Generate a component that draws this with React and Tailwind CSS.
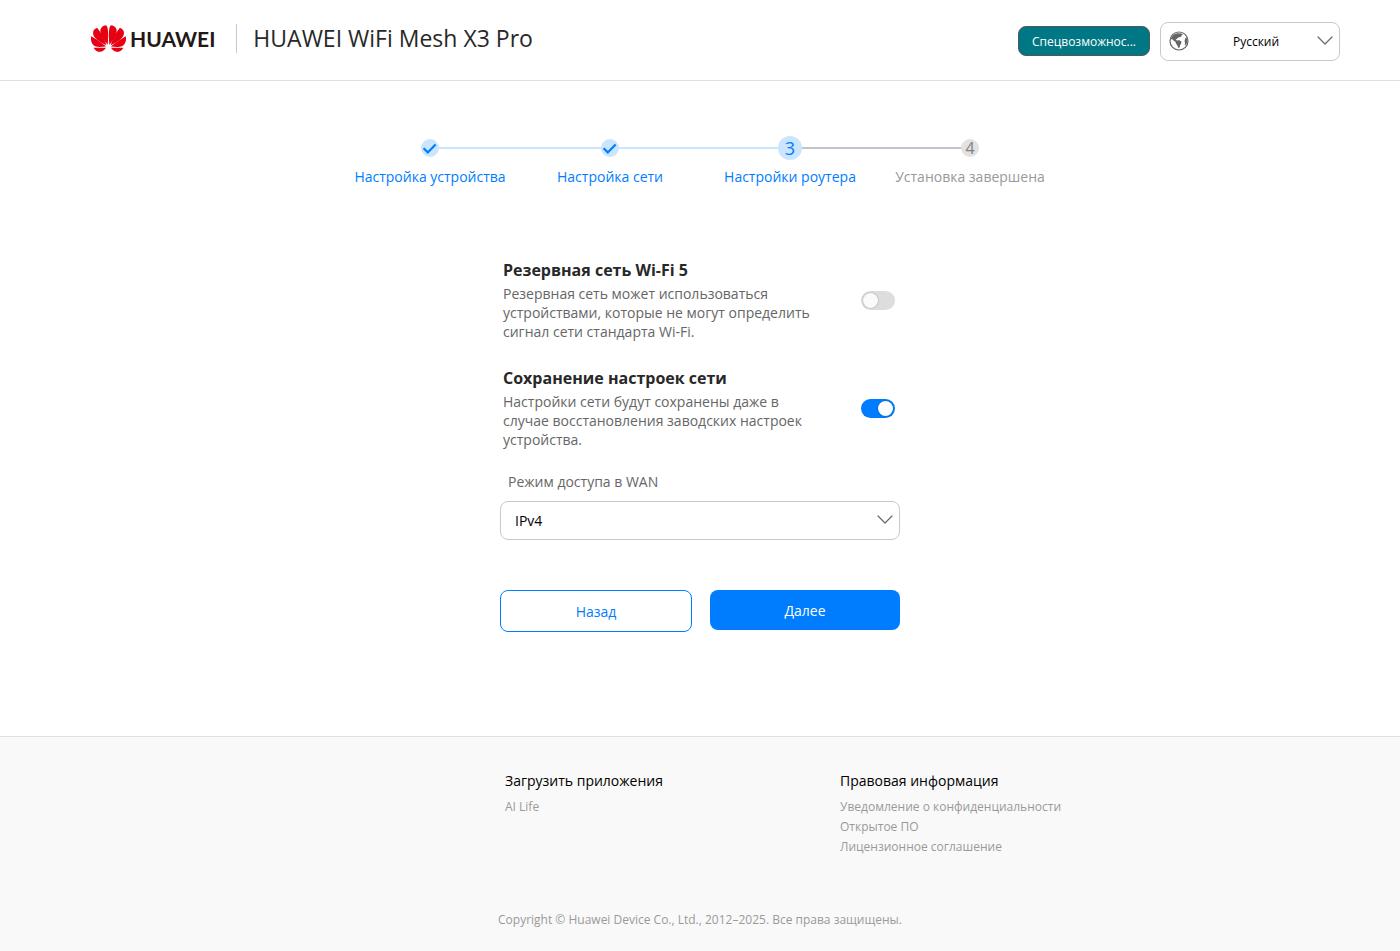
import { useState } from 'react'

const STEPS = [
  { label: 'Настройка устройства', state: 'done' },
  { label: 'Настройка сети', state: 'done' },
  { label: 'Настройки роутера', state: 'active' },
  { label: 'Установка завершена', state: 'pending' },
]

const LEGAL_LINKS = ['Уведомление о конфиденциальности', 'Открытое ПО', 'Лицензионное соглашение']

// left half of the flower, mirrored for the right half
const PETALS = [
  'M50 59C36 42 28 30 28 17C28 7 36 1 45 0C51 3 53 22 50 59Z',
  'M46 60C25 50 7 39 6 24C6 16 11 11 18 8C29 20 41 42 46 60Z',
  'M0 33C14 41 35 54 45 64C30 66 19 66 12 63C3 59 -2 46 0 33Z',
  'M45 68L8 68C12 77 20 81 27 80C35 80 41 75 45 68Z',
]

function HuaweiMark() {
  const petals = PETALS.map((d) => <path key={d} d={d} />)
  return (
    <svg width="35" height="27" viewBox="0 0 105 80" fill="#e60012">
      <g>{petals}</g>
      <g transform="matrix(-1 0 0 1 105 0)">{petals}</g>
    </svg>
  )
}

function Chevron() {
  return (
    <svg className="pointer-events-none absolute right-[7px] top-[14px]" width="16" height="10" viewBox="0 0 16 10" fill="none">
      <path d="M1 1L8 8L15 1" stroke="#6b6b6b" strokeWidth="1.3" strokeLinecap="round" strokeLinejoin="round" />
    </svg>
  )
}

function GlobeIcon() {
  return (
    <svg className="pointer-events-none absolute left-[9px] top-[9px]" width="20" height="20" viewBox="0 0 20 20">
      <circle cx="10" cy="10" r="9" fill="none" stroke="#666666" strokeWidth="1.2" />
      <path
        d="M1.6 8.4C2.4 5.2 5 2.8 8.2 2.2L12.6 2.6L14 3.6L12.4 4.6L12.2 5.8L9.4 6.4L8 7.8L6.6 8.8L8 9.6L10.4 9.2L12.4 10.4L12.2 12.6L11.2 14L10.6 16.4L9.4 17L8.4 14.4L7 12.4L6.4 10.8L4.4 9.6L3.4 8.2Z"
        fill="#666666"
      />
      <path d="M17.2 6L16.2 7.6L15.6 9.8L16 12L15.8 14L16.6 14.2L18 12L18.4 8.6Z" fill="#666666" />
    </svg>
  )
}

function StepMarker({ state, number }) {
  if (state === 'active') {
    return (
      <span className="flex h-6 w-6 items-center justify-center rounded-full bg-[#cce5ff] text-lg text-[#007dff]">
        {number}
      </span>
    )
  }
  if (state === 'done') {
    return (
      <span className="flex h-[18px] w-[18px] items-center justify-center rounded-full bg-[#cce5ff]">
        <svg width="18" height="18" viewBox="0 0 18 18" fill="none">
          <path d="M2.6 9.2L6.8 13.4L14.6 5.4" stroke="#007dff" strokeWidth="2.2" />
        </svg>
      </span>
    )
  }
  return (
    <span className="flex h-[18px] w-[18px] items-center justify-center rounded-full bg-[#e2e2e2] text-base text-[#808080]">
      {number}
    </span>
  )
}

function Stepper() {
  return (
    <ol className="mx-auto flex max-w-[720px]">
      {STEPS.map((step, i) => (
        <li key={step.label} className="relative flex flex-1 flex-col items-center">
          {i < STEPS.length - 1 && (
            <span
              className={`absolute left-1/2 top-[11px] h-0.5 w-full ${
                step.state === 'done' ? 'bg-[#cce5ff]' : 'bg-[#c4c4ce]'
              }`}
            />
          )}
          <div className="relative z-10 flex h-6 items-center">
            <StepMarker state={step.state} number={i + 1} />
          </div>
          <span
            className={`mt-[7px] whitespace-nowrap text-sm leading-5 ${
              step.state === 'pending' ? 'text-[#999999]' : 'text-[#007dff]'
            }`}
          >
            {step.label}
          </span>
        </li>
      ))}
    </ol>
  )
}

function ToggleRow({ id, title, description, checked, onChange }) {
  return (
    <div className="flex items-start justify-between pl-[3px] pr-[5px]">
      <div className="w-80">
        <label htmlFor={id} className="block text-base font-bold leading-6 text-[#282828]">
          {title}
        </label>
        <p className="mt-0.5 text-sm leading-[19px] text-[#666666]">{description}</p>
      </div>
      <input
        id={id}
        type="checkbox"
        role="switch"
        checked={checked}
        onChange={(e) => onChange(e.target.checked)}
        className="mt-[33px] h-[19px] w-[34px] shrink-0 cursor-pointer appearance-none rounded-full bg-[#dddddd] p-0.5 before:block before:h-[15px] before:w-[15px] before:rounded-full before:bg-[#fafafa] before:shadow-[0_0_2px_rgba(0,0,0,0.3)] checked:bg-[#007dff] checked:before:ml-[15px] checked:before:bg-white"
      />
    </div>
  )
}

export default function App() {
  const [backup, setBackup] = useState(false)
  const [keep, setKeep] = useState(true)

  return (
    <div className="flex min-h-screen flex-col bg-white font-['Open_Sans','Noto_Sans',sans-serif] text-black">
      <header className="flex h-[81px] items-start justify-between border-b border-[#dfdfdf] pl-[91px] pr-[60px]">
        <div className="flex items-center pt-[21px]">
          <HuaweiMark />
          <span className="ml-1 pt-0.5 font-['Lato',sans-serif] text-[21px] font-bold leading-8 text-[#231815]">
            HUAWEI
          </span>
          <span className="ml-[21px] h-[29px] w-px bg-[#c8c8c8]" />
          <h1 className="ml-4 text-[23px] leading-8 text-[#282828]">HUAWEI WiFi Mesh X3 Pro</h1>
        </div>
        <div className="flex items-start gap-2.5 pt-[22px]">
          <button
            type="button"
            className="mt-1 h-[30px] w-[132px] whitespace-nowrap rounded-lg border border-[#555555] bg-[#007784] pt-px text-center text-xs text-white"
          >
            Спецвозможнос...
          </button>
          <div className="relative">
            <GlobeIcon />
            <select
              aria-label="Язык"
              className="h-[39px] w-[180px] appearance-none rounded-lg border border-[#c8c8c8] bg-transparent pl-8 pr-5 text-center text-xs"
            >
              <option>Русский</option>
              <option>English</option>
            </select>
            <Chevron />
          </div>
        </div>
      </header>

      <main className="flex-1 pt-[55px]">
        <Stepper />

        <form className="mx-auto mt-[71px] max-w-[400px]" onSubmit={(e) => e.preventDefault()}>
          <div className="flex flex-col gap-[25px]">
            <ToggleRow
              id="backup"
              title="Резервная сеть Wi-Fi 5"
              description="Резервная сеть может использоваться устройствами, которые не могут определить сигнал сети стандарта Wi-Fi."
              checked={backup}
              onChange={setBackup}
            />
            <ToggleRow
              id="keep"
              title="Сохранение настроек сети"
              description="Настройки сети будут сохранены даже в случае восстановления заводских настроек устройства."
              checked={keep}
              onChange={setKeep}
            />
          </div>

          <label htmlFor="wan" className="mt-[23px] block pl-2 text-sm leading-5 text-[#666666]">
            Режим доступа в WAN
          </label>
          <div className="relative mt-[9px]">
            <select
              id="wan"
              className="block h-[39px] w-full appearance-none rounded-lg border border-[#c8c8c8] bg-white pl-3.5 pr-8 text-sm"
            >
              <option>IPv4</option>
              <option>IPv4 и IPv6</option>
            </select>
            <Chevron />
          </div>

          <div className="mt-[50px] flex items-start gap-[18px]">
            <button
              type="button"
              className="h-[42px] w-48 rounded-lg border border-[#007dff] pt-px text-sm text-[#007dff]"
            >
              Назад
            </button>
            <button type="submit" className="h-10 flex-1 rounded-lg bg-[#007dff] pt-px text-sm text-white">
              Далее
            </button>
          </div>
        </form>
      </main>

      <footer className="border-t border-[#dfdfdf] bg-[#f9f9f9] pb-[21px] pt-8">
        <div className="mx-auto flex min-h-[137px] max-w-[1010px] pl-[310px]">
          <div className="w-[335px]">
            <h2 className="text-sm leading-6">Загрузить приложения</h2>
            <a href="#" className="mt-1 block text-xs leading-5 text-[#999999]">
              AI Life
            </a>
          </div>
          <div>
            <h2 className="text-sm leading-6">Правовая информация</h2>
            <ul className="mt-1">
              {LEGAL_LINKS.map((link) => (
                <li key={link} className="text-xs leading-5 text-[#999999]">
                  <a href="#">{link}</a>
                </li>
              ))}
            </ul>
          </div>
        </div>
        <p className="mt-1 text-center text-xs leading-5 text-[#999999]">
          Copyright © Huawei Device Co., Ltd., 2012–2025. Все права защищены.
        </p>
      </footer>
    </div>
  )
}
